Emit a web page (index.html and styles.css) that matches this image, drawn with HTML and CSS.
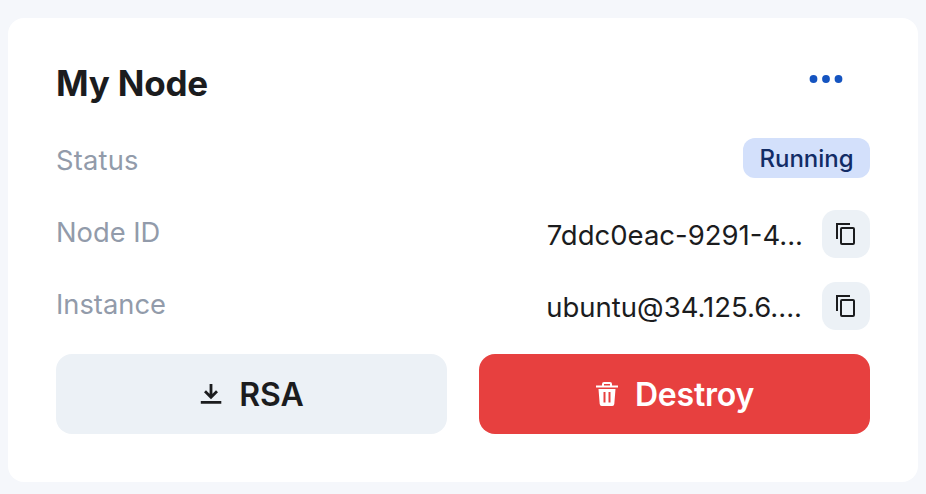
FILE: index.html
```html
<!DOCTYPE html>
<html lang="en">
<head>
<meta charset="utf-8">
<title>My Node</title>
<link rel="stylesheet" href="styles.css">
</head>
<body>
<main class="card">
  <header class="header">
    <h1 class="title">My Node</h1>
    <button class="more" aria-label="More">
      <svg width="34" height="8" viewBox="0 0 34 8" fill="currentColor"><circle cx="4.5" cy="4" r="3.9"/><circle cx="17" cy="4" r="3.9"/><circle cx="29.5" cy="4" r="3.9"/></svg>
    </button>
  </header>
  <section class="details">
    <div class="row"><span class="label status">Status</span><span class="badge">Running</span></div>
    <div class="row"><span class="label">Node ID</span><span class="value">7ddc0eac-9291-4...</span>
      <button class="copy" aria-label="Copy node ID"><svg width="24" height="24" viewBox="0 0 24 24" fill="none" stroke="currentColor" stroke-width="2"><path d="M3 17V2h13"/><rect x="7" y="6" width="13" height="16" rx="1"/></svg></button></div>
    <div class="row"><span class="label">Instance</span><span class="value instance">ubuntu@34.125.6....</span>
      <button class="copy" aria-label="Copy instance"><svg width="24" height="24" viewBox="0 0 24 24" fill="none" stroke="currentColor" stroke-width="2"><path d="M3 17V2h13"/><rect x="7" y="6" width="13" height="16" rx="1"/></svg></button></div>
  </section>
  <footer class="actions">
    <button class="action rsa"><svg width="24" height="24" viewBox="0 0 24 24" fill="none" stroke="currentColor" stroke-width="2.8"><path d="M12 2v13.500M6 9.300l6 6 6-6M1.800 20.400h20.500"/></svg><span class="action-text">RSA</span></button>
    <button class="action destroy"><svg width="24" height="26" viewBox="0 0 24 26" fill="currentColor"><path d="M1 4.500h6V3q0-2 2-2h6q2 0 2 2v1.500h6v2H1zM9 4.500h6V3H9z" fill-rule="evenodd"/><path d="M3.500 8h17L19.300 23q-.2 2-2 2H6.700q-1.800 0-2-2zM8.500 11v10.500h2V11zM13.500 11v10.500h2V11z" fill-rule="evenodd"/></svg><span class="action-text destroy-text">Destroy</span></button>
  </footer>
</main>
</body>
</html>
```
FILE: styles.css
```css
* { box-sizing: border-box; }
body { margin: 0; padding: 18px 8px 12px; background: #f5f7fb; font-family: Inter, sans-serif; color: #1b1c1e; }
.card { height: 464px; padding: 48px; background: #fff; border-radius: 16px; }
button { border: 0; padding: 0; font: inherit; color: inherit; }
svg { display: block; flex: none; }
.header { display: flex; justify-content: space-between; height: 72px; }
.title { margin: 0; font-size: 35px; line-height: 35px; font-weight: 700; letter-spacing: -.2px; white-space: nowrap; }
.more { height: 26px; margin-right: 27px; background: none; color: #1554c0; }
.row { display: flex; align-items: flex-start; height: 72px; }
.label { margin-right: auto; font-size: 27.3px; line-height: 46px; color: #929baa; }
.status { letter-spacing: .2px; }
.badge { width: 127px; height: 40px; border-radius: 12px; background: #d3e0fb; color: #122c66; text-align: center; font-size: 24px; line-height: 42px; font-weight: 500; }
.value { font-size: 27.5px; line-height: 50px; white-space: nowrap; margin-right: 19px; }
.instance { margin-right: 20px; }
.copy { display: grid; place-items: center; width: 48px; height: 48px; border-radius: 14px; background: #ecf1f6; }
.actions { display: grid; grid-template-columns: 1fr 1fr; gap: 32px; }
.action { display: flex; align-items: center; justify-content: center; gap: 16px; height: 80px; border-radius: 16px; font-size: 32px; line-height: 42px; font-weight: 600; }
.action-text { padding-top: 2px; }
.rsa { background: #ecf1f6; }
.destroy { background: #e7403f; color: #fff; }
.destroy-text { letter-spacing: -.2px; }
```
